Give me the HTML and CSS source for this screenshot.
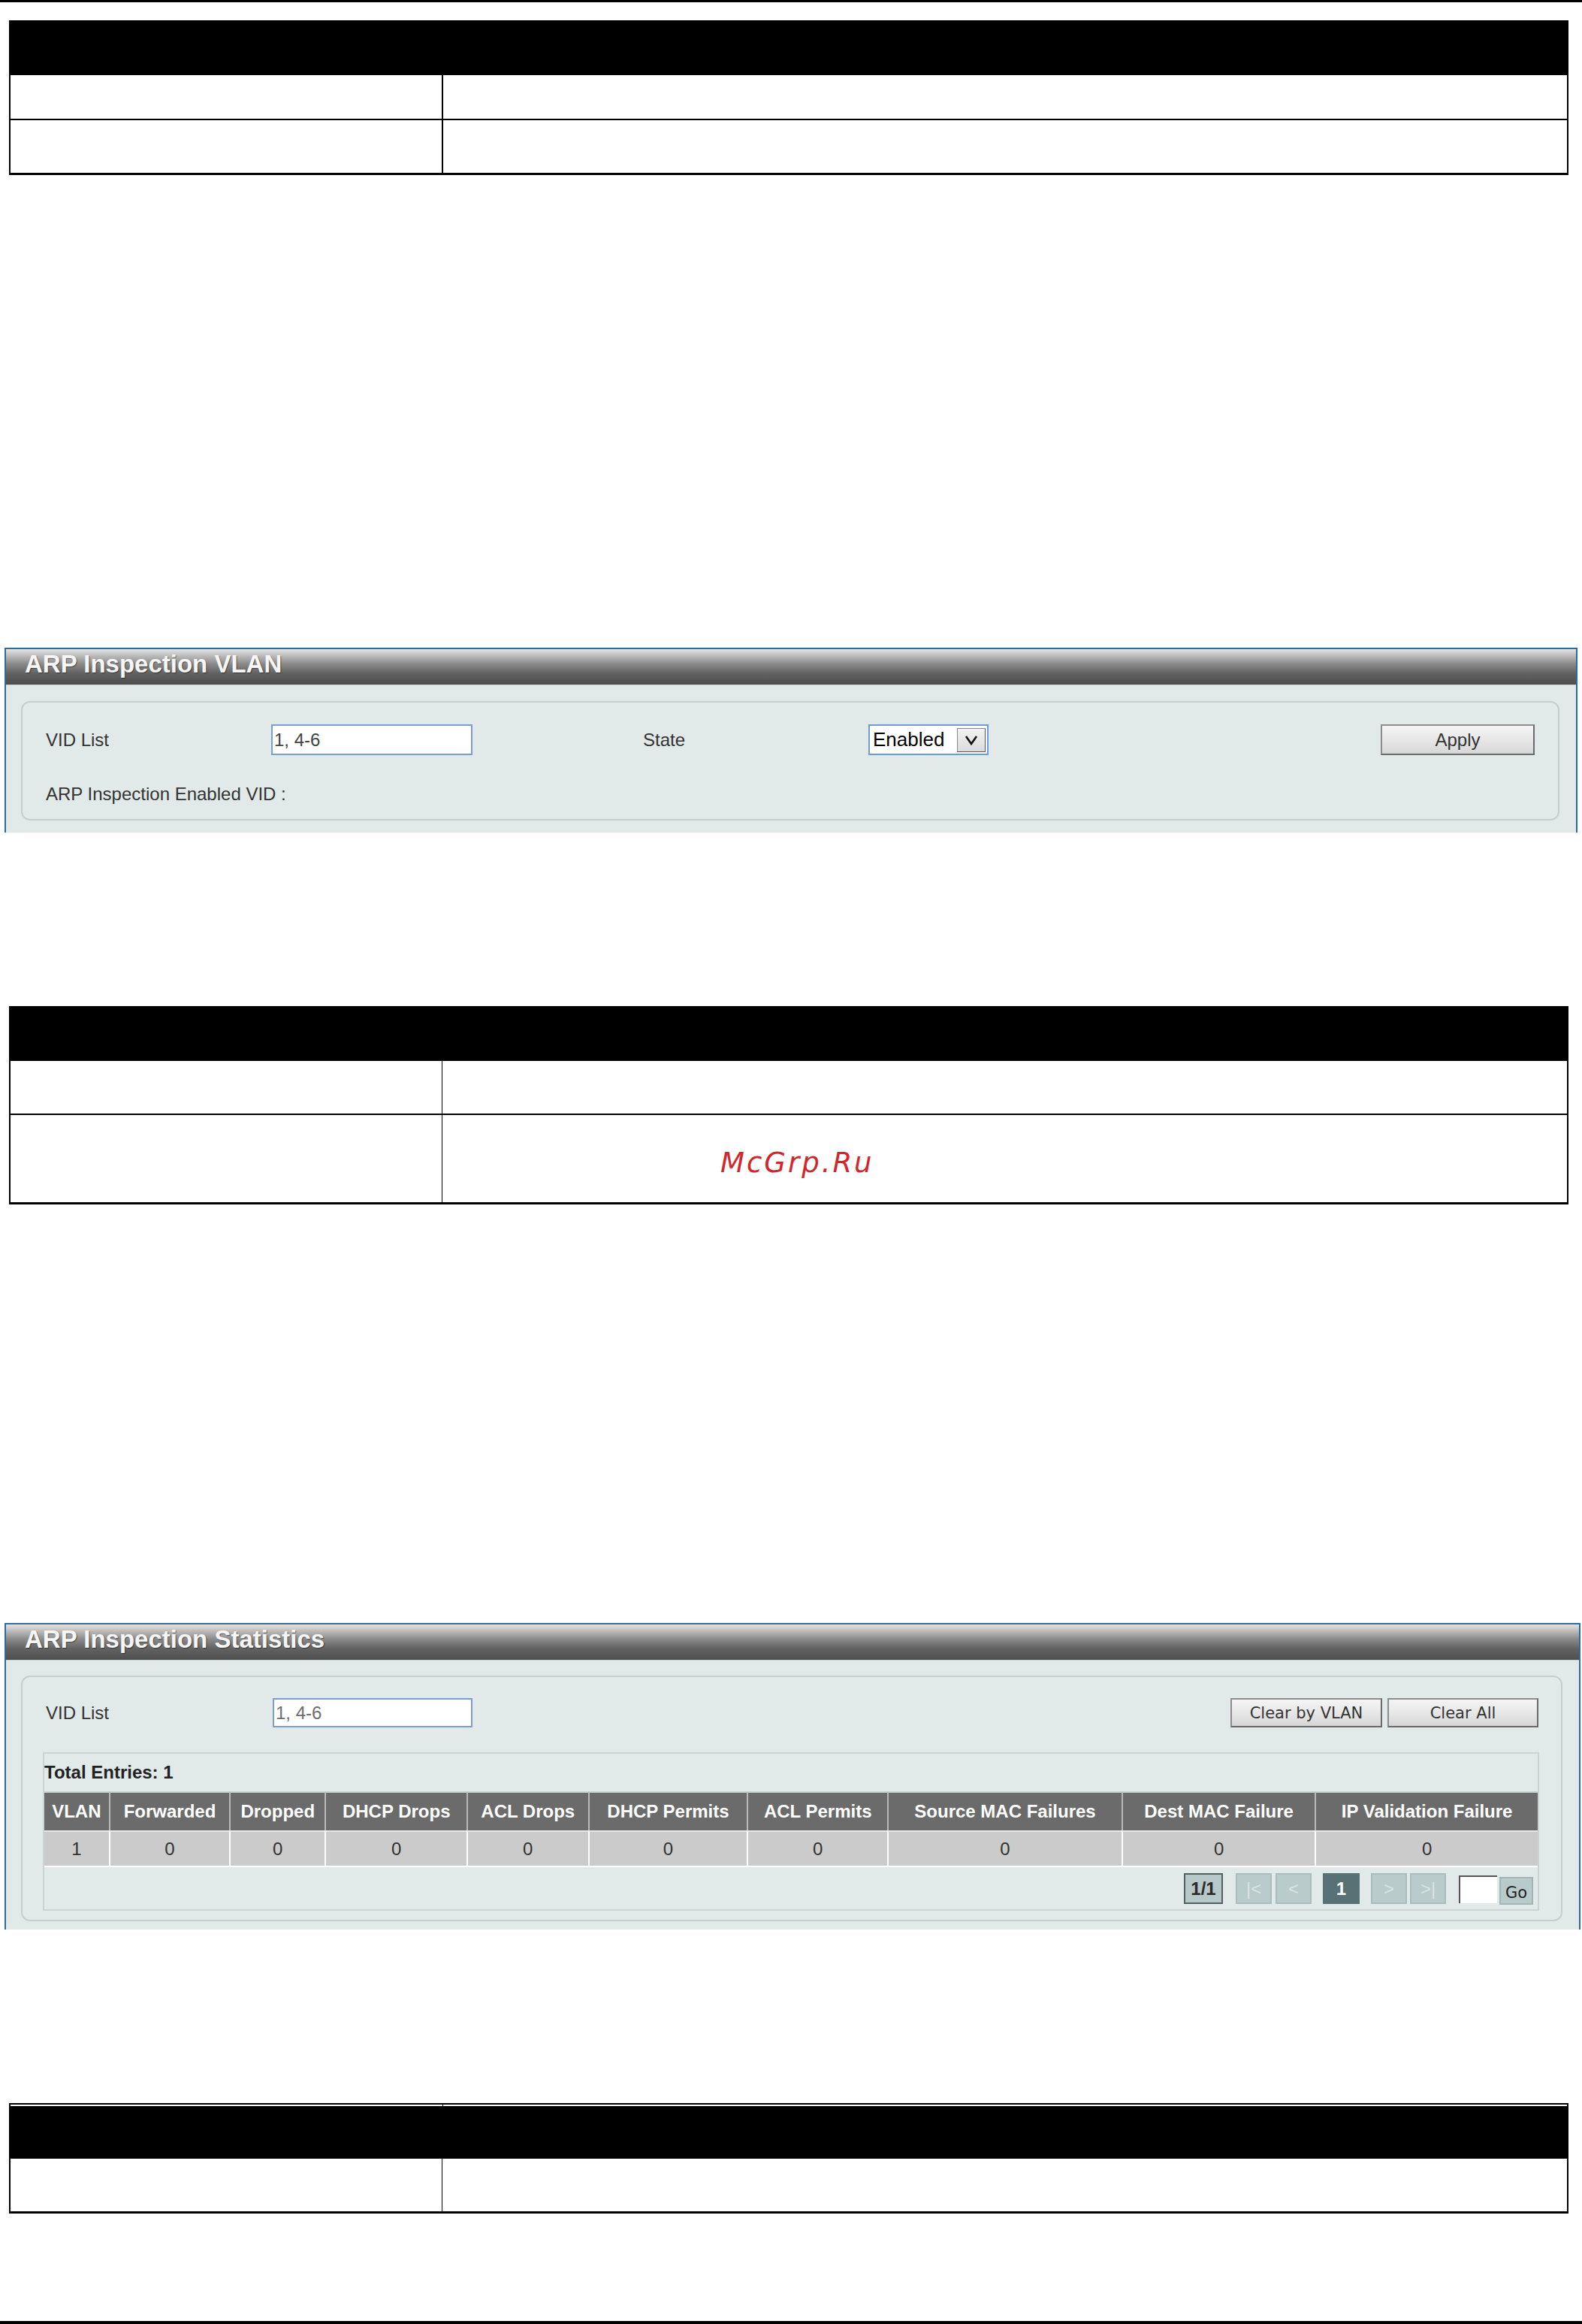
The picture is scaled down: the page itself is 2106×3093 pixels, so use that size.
FILE: index.html
```html
<!DOCTYPE html>
<html>
<head>
<meta charset="utf-8">
<title>ARP Inspection</title>
<link rel="stylesheet" href="styles.css">
</head>
<body>
<div class="rule rule-top"></div>

<div class="doc-table t1">
  <div class="dt-head"></div>
  <div class="dt-row h58 sep"><div class="c1"></div><div class="c2"></div></div>
  <div class="dt-row h70"><div class="c1"></div><div class="c2"></div></div>
</div>

<section class="panel p-vlan">
  <div class="panel-title">ARP Inspection VLAN</div>
  <div class="panel-body">
    <div class="box box-vlan">
      <div class="form-row">
        <span class="lbl lbl-vid">VID List</span>
        <div class="txt txt-dark">1, 4-6</div>
        <span class="lbl lbl-state">State</span>
        <div class="select">
          <span class="sel-val">Enabled</span>
          <span class="sel-btn"><svg width="18" height="14" viewBox="0 0 18 14"><polyline points="2,2 9,12 16,2" fill="none" stroke="#111" stroke-width="2.6"/></svg></span>
        </div>
        <div class="btn btn-apply">Apply</div>
      </div>
      <div class="info">ARP Inspection Enabled VID :</div>
    </div>
  </div>
</section>

<div class="doc-table t2 thin">
  <div class="dt-head"></div>
  <div class="dt-row h70 sep"><div class="c1"></div><div class="c2"></div></div>
  <div class="dt-row h116"><div class="c1"></div><div class="c2 wm-host"><span class="watermark">McGrp.Ru</span></div></div>
</div>

<section class="panel p-stats">
  <div class="panel-title">ARP Inspection Statistics</div>
  <div class="panel-body">
    <div class="box box-stats">
      <div class="form-row row-stats">
        <span class="lbl lbl-vid2">VID List</span>
        <div class="txt txt-light">1, 4-6</div>
        <div class="btn-group">
          <div class="btn btn-clear btn-vlan">Clear by VLAN</div>
          <div class="btn btn-clear btn-all">Clear All</div>
        </div>
      </div>
      <div class="grid-wrap">
        <div class="entries">Total Entries: 1</div>
        <table class="stats">
          <colgroup>
            <col><col><col><col><col><col><col><col><col><col>
          </colgroup>
          <thead>
            <tr>
              <th>VLAN</th><th>Forwarded</th><th>Dropped</th><th>DHCP Drops</th><th>ACL Drops</th><th>DHCP Permits</th><th>ACL Permits</th><th>Source MAC Failures</th><th>Dest MAC Failure</th><th>IP Validation Failure</th>
            </tr>
          </thead>
          <tbody>
            <tr>
              <td>1</td><td>0</td><td>0</td><td>0</td><td>0</td><td>0</td><td>0</td><td>0</td><td>0</td><td>0</td>
            </tr>
          </tbody>
        </table>
        <div class="pager">
          <div class="pg pg-info">1/1</div>
          <div class="pg pg-dis pg-first">|&lt;</div>
          <div class="pg pg-dis pg-prev">&lt;</div>
          <div class="pg pg-cur">1</div>
          <div class="pg pg-dis pg-next">&gt;</div>
          <div class="pg pg-dis pg-last">&gt;|</div>
          <div class="pg-input"></div>
          <div class="pg-go">Go</div>
        </div>
      </div>
    </div>
  </div>
</section>

<div class="doc-table t3 thin">
  <div class="dt-head split"><div class="hc1"></div><div class="hc2"></div></div>
  <div class="dt-row h70"><div class="c1"></div><div class="c2"></div></div>
</div>

<div class="rule rule-bottom"></div>
</body>
</html>
```

FILE: styles.css
```css
html, body {
  margin: 0;
  padding: 0;
  background: #ffffff;
}

body {
  width: 2106px;
  font-family: "Liberation Sans", Arial, sans-serif;
  color: #333;
}

/* page rules */
.rule { background: #000; }
.rule-top { height: 3px; }
.rule-bottom { height: 4px; margin-top: 143px; }

/* document tables (black headers) */
.doc-table {
  margin-left: 12px;
  width: 2076px;
  box-sizing: border-box;
  border: 2px solid #000;
  border-bottom-width: 3px;
}
.t1 { margin-top: 24px; }
.t2 { margin-top: 231px; }
.t3 { margin-top: 231px; }

.dt-head { height: 71px; background: #000; }
.dt-head.split {
  height: 72px;
  display: grid;
  grid-template-columns: 575px 1fr;
  column-gap: 1px;
}
.dt-head.split .hc1,
.dt-head.split .hc2 {
  background: #000;
  border-top: 2px solid #fff;
}

.dt-row {
  display: grid;
  grid-template-columns: 576px 1fr;
}
.thin .dt-row { grid-template-columns: 575px 1fr; }
.dt-row.sep { border-bottom: 2px solid #000; }
.dt-row .c1 { border-right: 2px solid #000; }
.thin .dt-row .c1 { border-right-width: 1px; }
.h58 { height: 58px; }
.h70 { height: 70px; }
.h116 { height: 116px; }

.wm-host { position: relative; }
.watermark {
  position: absolute;
  left: 370px;
  top: 45px;
  font-family: "DejaVu Sans", sans-serif;
  font-style: italic;
  font-size: 37px;
  letter-spacing: 3px;
  color: #d3252b;
  line-height: 1;
}

/* panels */
.panel {
  margin-left: 6px;
  box-sizing: border-box;
  border: 2px solid #2c6b9c;
  border-bottom: none;
  background: #e2eae9;
}
.p-vlan { width: 2094px; margin-top: 629px; }
.p-stats { width: 2098px; margin-top: 557px; }

.panel-title {
  height: 48px;
  box-sizing: border-box;
  padding-left: 25px;
  line-height: 40px;
  font-size: 33px;
  font-weight: bold;
  color: #f6f6f6;
  text-shadow: 1px 1px 1px rgba(0, 0, 0, 0.45);
  background: linear-gradient(to bottom, #e4e4e4 0%, #bdbdbd 18%, #8a8a8a 42%, #626262 68%, #4e4e4e 100%);
  border-bottom: 1px solid #c4cccc;
}

.panel-body { overflow: hidden; }

.box {
  margin-left: 20px;
  margin-right: 22px;
  border: 2px solid #c4cfcf;
  border-radius: 12px;
  background: #e2eae9;
}
.box-vlan {
  margin-top: 21px;
  margin-bottom: 16px;
  padding: 29px 31px 19px 31px;
}
.box-stats {
  margin-top: 20px;
  margin-bottom: 11px;
  padding: 28px 30px 12px 27px;
}

.form-row {
  display: flex;
  align-items: center;
  height: 41px;
}
.row-stats { height: 39px; }

.lbl {
  font-size: 24px;
  color: #333;
}
.lbl-vid { width: 300px; }
.lbl-vid2 { width: 302px; padding-left: 4px; }
.lbl-state { width: 300px; margin-left: 227px; }

.txt {
  width: 268px;
  height: 41px;
  box-sizing: border-box;
  border: 2px solid #7a9fcf;
  background: #fff;
  font-size: 24px;
  line-height: 37px;
  padding-left: 2px;
}
.row-stats .txt { height: 39px; line-height: 35px; width: 266px; }
.txt-dark { color: #444; }
.txt-light { color: #6e6e6e; }

.select {
  width: 160px;
  height: 41px;
  box-sizing: border-box;
  border: 2px solid #6d9bd8;
  background: #fff;
  display: flex;
  align-items: center;
  justify-content: space-between;
  padding: 0 2px 0 4px;
}
.sel-val { font-size: 26px; color: #000; }
.sel-btn {
  width: 38px;
  height: 32px;
  box-sizing: border-box;
  border: 1px solid #8a8a8a;
  border-right-color: #555;
  border-bottom-color: #555;
  background: linear-gradient(#f2f2f2, #dcdcdc);
  display: flex;
  align-items: center;
  justify-content: center;
}

.btn {
  box-sizing: border-box;
  display: flex;
  align-items: center;
  justify-content: center;
  color: #333;
  background: linear-gradient(to bottom, #f5f5f5 0%, #e4e4e4 60%, #d6d6d6 100%);
  border: 2px solid #8c8c8c;
  border-right-color: #6a6a6a;
  border-bottom-color: #6a6a6a;
}
.btn-apply {
  margin-left: auto;
  width: 205px;
  height: 41px;
  font-size: 24px;
}

.info {
  margin-top: 38px;
  height: 28px;
  line-height: 28px;
  font-size: 24px;
  color: #333;
}

.btn-group {
  margin-left: auto;
  display: flex;
  gap: 7px;
}
.btn-clear {
  height: 39px;
  font-family: "DejaVu Sans", sans-serif;
  font-size: 21px;
}
.btn-vlan { width: 202px; }
.btn-all { width: 201px; }

/* statistics grid */
.grid-wrap {
  margin-top: 33px;
  width: 1992px;
  box-sizing: border-box;
  border: 2px solid #cbd4d4;
}
.entries {
  height: 50px;
  line-height: 50px;
  font-size: 24px;
  font-weight: bold;
  color: #222;
}

.stats {
  width: 100%;
  table-layout: fixed;
  border-collapse: separate;
  border-spacing: 0;
}
.stats col:nth-child(1) { width: 85px; }
.stats col:nth-child(2) { width: 159px; }
.stats col:nth-child(3) { width: 126px; }
.stats col:nth-child(4) { width: 187px; }
.stats col:nth-child(5) { width: 160px; }
.stats col:nth-child(6) { width: 210px; }
.stats col:nth-child(7) { width: 185px; }
.stats col:nth-child(8) { width: 309px; }
.stats col:nth-child(9) { width: 255px; }
.stats col:nth-child(10) { width: 294px; }

.stats th {
  height: 50px;
  padding: 0;
  background: #6b6b6b;
  color: #fff;
  font-size: 24px;
  font-weight: bold;
  text-align: center;
  white-space: nowrap;
  border-top: 2px solid #c9d1d1;
  border-left: 2px solid #b9b9b9;
}
.stats td {
  height: 45px;
  padding: 0;
  background: #cbcbcb;
  color: #333;
  font-size: 24px;
  text-align: center;
  border-top: 2px solid #e6e6e6;
  border-bottom: 2px solid #ffffff;
  border-left: 2px solid #ffffff;
}
.stats th:first-child,
.stats td:first-child { border-left: none; }

/* pager */
.pager {
  height: 56px;
  box-sizing: border-box;
  padding: 8px 6px 0 0;
  display: flex;
  justify-content: flex-end;
  align-items: flex-start;
}
.pg {
  height: 41px;
  box-sizing: border-box;
  display: flex;
  align-items: center;
  justify-content: center;
  font-size: 24px;
}
.pg-info {
  width: 52px;
  margin-right: 17px;
  background: #b7c8c8;
  border: 2px solid #52605f;
  color: #2b2b2b;
  font-weight: bold;
}
.pg-dis {
  width: 48px;
  background: #b9cbcb;
  border: 2px solid #a9bdbd;
  color: #dbe4e4;
}
.pg-first { margin-right: 5px; }
.pg-prev { margin-right: 15px; }
.pg-cur {
  width: 49px;
  margin-right: 15px;
  background: #587174;
  border: 2px solid #587174;
  color: #fff;
  font-weight: bold;
}
.pg-next { margin-right: 4px; }
.pg-last { margin-right: 17px; }
.pg-input {
  width: 51px;
  height: 37px;
  margin-top: 3px;
  margin-right: 3px;
  box-sizing: border-box;
  background: #fff;
  border-top: 2px solid #555;
  border-left: 2px solid #555;
}
.pg-go {
  width: 45px;
  height: 37px;
  margin-top: 5px;
  box-sizing: border-box;
  background: #b9caca;
  border: 2px solid #a2b6b6;
  display: flex;
  align-items: flex-end;
  justify-content: center;
  padding-bottom: 2px;
  font-family: "DejaVu Sans", sans-serif;
  font-size: 21px;
  color: #222;
}
```
